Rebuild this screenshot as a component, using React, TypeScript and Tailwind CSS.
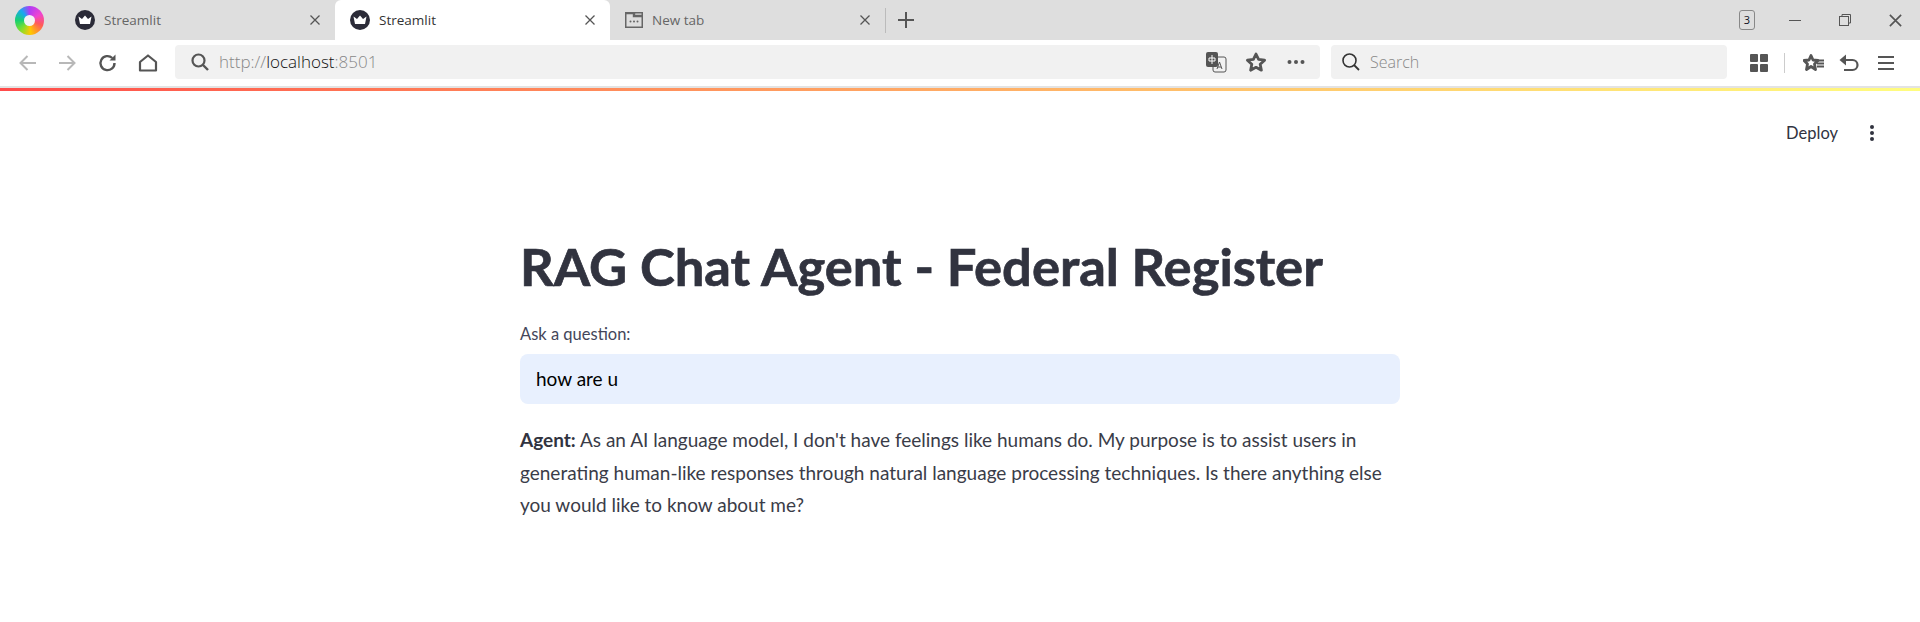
import React from "react";

const ui = "font-['Open_Sans','Noto_Sans',sans-serif]";
const st = "font-['Lato','Noto_Sans',sans-serif]";

function Crown() {
  return (
    <svg width="20" height="20" viewBox="0 0 20 20" className="shrink-0">
      <circle cx="10" cy="10" r="10" fill="#2b2b38" />
      <path d="M3.5 6.5 L7 9 L10 5.5 L13 9 L16.5 6.5 L15 14 L5 14 Z" fill="#fff" />
    </svg>
  );
}

function X({ size = 12, color = "#555" }: { size?: number; color?: string }) {
  return (
    <svg width={size} height={size} viewBox="0 0 12 12" className="shrink-0">
      <path d="M1.5 1.5 L10.5 10.5 M10.5 1.5 L1.5 10.5" stroke={color} strokeWidth="1.3" fill="none" />
    </svg>
  );
}

function Tab({ active, label, icon, w }: { active?: boolean; label: string; icon: React.ReactNode; w: string }) {
  return (
    <div className={`flex h-10 items-center pl-[15px] pr-[14px] ${w} ${active ? "rounded-t-md bg-white text-[#333]" : "text-[#666]"}`}>
      {icon}
      <span className={`ml-[9px] flex-1 text-[13.5px] ${ui}`}>{label}</span>
      <X />
    </div>
  );
}

export default function App() {
  return (
    <div className="flex h-[622px] w-[1920px] flex-col overflow-hidden bg-white">
      <div className="flex h-10 items-center bg-[#dedede]">
        <div className="flex w-[60px] justify-start pl-[15px]">
          <div className="flex h-[29px] w-[29px] items-center justify-center rounded-full bg-[conic-gradient(#b03cf5_0deg,#f044d0_60deg,#ff5a5a_110deg,#ffc800_175deg,#7adf30_225deg,#18d070_270deg,#18a8f0_320deg,#b03cf5_360deg)] blur-[0.6px]">
            <div className="h-[11px] w-[11px] rounded-full bg-[#f4f4f4]" />
          </div>
        </div>
        <Tab label="Streamlit" w="w-[275px]" icon={<Crown />} />
        <Tab active label="Streamlit" w="w-[275px]" icon={<Crown />} />
        <Tab
          label="New tab"
          w="w-[275px]"
          icon={
            <svg width="18" height="16" viewBox="0 0 18 16" className="shrink-0">
              <rect x="0.75" y="0.75" width="16.5" height="14.5" fill="none" stroke="#666" strokeWidth="1.5" />
              <path d="M1 1h8v3h8" fill="none" stroke="#666" strokeWidth="2.4" />
              <circle cx="5.5" cy="9.5" r="1" fill="#666" />
              <circle cx="9" cy="9.5" r="1" fill="#666" />
              <circle cx="12.5" cy="9.5" r="1" fill="#666" />
            </svg>
          }
        />
        <div className="h-[25px] w-px bg-[#bbb]" />
        <svg width="16" height="16" viewBox="0 0 16 16" className="ml-[12px]">
          <path d="M8 0v16M0 8h16" stroke="#555" strokeWidth="2" />
        </svg>
        <div className="flex-1" />
        <div className={`mr-[33px] flex h-[20px] w-[16px] items-center justify-center rounded-[3px] border border-[#888] text-[11px] text-[#112] ${ui}`}>3</div>
        <svg width="14" height="14" viewBox="0 0 14 14" className="mr-[36px]">
          <path d="M1 7.5h12" stroke="#555" strokeWidth="1" />
        </svg>
        <svg width="14" height="14" viewBox="0 0 14 14" className="mr-[36px]">
          <rect x="1.5" y="3.5" width="9" height="9" fill="none" stroke="#555" />
          <path d="M4 3.5V1.5h8.5v8.5h-2" fill="none" stroke="#555" />
        </svg>
        <X size={15} color="#555" />
        <div className="w-[17px]" />
      </div>

      <div className="flex h-[48px] items-center border-b-2 border-b-[#e3e3e3] bg-white">
        <svg width="20" height="20" viewBox="0 0 20 20" className="ml-[18px]">
          <path d="M18 10H3M9.5 3 L2.5 10 L9.5 17" fill="none" stroke="#b8b8b8" strokeWidth="2" />
        </svg>
        <svg width="20" height="20" viewBox="0 0 20 20" className="ml-[19px]">
          <path d="M2 10h15M10.5 3 L17.5 10 L10.5 17" fill="none" stroke="#b8b8b8" strokeWidth="2" />
        </svg>
        <svg width="20" height="20" viewBox="0 0 20 20" className="ml-[21px]">
          <path d="M16.5 10a7 7 0 1 1-2.2-5" fill="none" stroke="#555" strokeWidth="2.4" />
          <path d="M17.5 1.5v6h-6z" fill="#555" />
        </svg>
        <svg width="20" height="20" viewBox="0 0 20 20" className="ml-[20px]">
          <path d="M2 17.5V9l8-6.5L18 9v8.5z" fill="none" stroke="#555" strokeWidth="2.2" strokeLinejoin="round" />
        </svg>
        <div className="mb-[2px] ml-[17px] flex h-[34px] w-[1145px] items-center rounded-[4px] bg-[#f1f1f1]">
          <svg width="20" height="20" viewBox="0 0 20 20" className="ml-[15px]">
            <circle cx="8.5" cy="8.5" r="6" fill="none" stroke="#555" strokeWidth="2.2" />
            <path d="M13 13l5 5" stroke="#555" strokeWidth="2.4" />
          </svg>
          <span className={`ml-[9px] flex-1 text-[17px] font-light text-[#888] ${ui}`}>
            http://<span className="text-[#111]">localhost</span>:8501
          </span>
          <svg width="22" height="22" viewBox="0 0 22 22" className="mr-[18px]">
            <rect x="8" y="6" width="13" height="15" rx="2" fill="#f1f1f1" stroke="#555" />
            <rect x="1" y="1" width="12" height="15" rx="2" fill="#555" />
            <path d="M4 7h6v3H4zM7 4v9" fill="none" stroke="#fff" />
            <path d="M12 18l2.5-7 2.5 7M13 16h3" fill="none" stroke="#555" />
          </svg>
          <svg width="22" height="22" viewBox="0 0 22 22" className="mr-[20px]">
            <path d="M11 3l2.6 5.4 6 .8-4.4 4.1 1.2 5.9L11 16.3l-5.4 2.9 1.2-5.9-4.4-4.1 6-.8z" fill="none" stroke="#555" strokeWidth="2.8" strokeLinejoin="round" />
          </svg>
          <svg width="18" height="6" viewBox="0 0 18 6" className="mr-[15px]">
            <circle cx="2.5" cy="3" r="2" fill="#555" />
            <circle cx="9" cy="3" r="2" fill="#555" />
            <circle cx="15.5" cy="3" r="2" fill="#555" />
          </svg>
        </div>
        <div className="mb-[2px] ml-[11px] flex h-[34px] w-[396px] items-center rounded-[4px] bg-[#f1f1f1]">
          <svg width="20" height="20" viewBox="0 0 20 20" className="ml-[10px]">
            <circle cx="8.5" cy="8.5" r="6.5" fill="none" stroke="#333" strokeWidth="1.6" />
            <path d="M13 13l5 5" stroke="#333" strokeWidth="1.8" />
          </svg>
          <span className={`ml-[9px] text-[16px] font-light text-[#888] ${ui}`}>Search</span>
        </div>
        <svg width="18" height="18" viewBox="0 0 18 18" className="ml-[23px]">
          <rect x="0" y="0" width="8" height="8" rx="1" fill="#555" />
          <rect x="10" y="0" width="8" height="8" rx="1" fill="#555" />
          <rect x="0" y="10" width="8" height="8" rx="1" fill="#555" />
          <rect x="10" y="10" width="8" height="8" rx="1" fill="#555" />
        </svg>
        <div className="ml-[16px] h-[20px] w-px bg-[#ccc]" />
        <svg width="21" height="20" viewBox="0 0 21 20" className="ml-[18px]">
          <path d="M8 2.5l2 4.5 5 .5-3.5 3.5 1 5.5L8 13.5 3.5 16.5l1-5.5L1 7.5l5-.5z" fill="none" stroke="#555" strokeWidth="2.8" strokeLinejoin="round" />
          <path d="M13 7.5h8M14 10.5h7M14 13.5h7" stroke="#555" strokeWidth="1.8" />
        </svg>
        <svg width="20" height="20" viewBox="0 0 20 20" className="ml-[15px]">
          <path d="M5 7h8.5a5 5 0 0 1 0 10H5" fill="none" stroke="#555" strokeWidth="2.2" />
          <path d="M7 1.5v11L0.5 7z" fill="#555" />
        </svg>
        <svg width="16" height="16" viewBox="0 0 16 16" className="ml-[19px]">
          <path d="M0 2h16M0 8h16M0 14h16" stroke="#555" strokeWidth="2" />
        </svg>
      </div>

      <div className="h-[3px] bg-gradient-to-r from-[#ff4b4b] to-[#fffd80]" />

      <div className={`flex h-[84px] items-center justify-end ${st}`}>
        <span className="mr-[31px] text-[16.5px] text-[#31333f]">Deploy</span>
        <svg width="6" height="18" viewBox="0 0 6 18" className="mr-[45px]">
          <circle cx="3" cy="3" r="2" fill="#31333f" />
          <circle cx="3" cy="9" r="2" fill="#31333f" />
          <circle cx="3" cy="15" r="2" fill="#31333f" />
        </svg>
      </div>

      <main className={`ml-[520px] w-[880px] pt-[58px] text-[#31333f] ${st}`}>
        <h1 className="text-[52.5px] leading-[66px] font-bold whitespace-nowrap [-webkit-text-stroke:0.7px_#31333f]">RAG Chat Agent - Federal Register</h1>
        <label className="mt-[25px] block text-[16.5px] leading-[20px] text-[#44465a]">Ask a question:</label>
        <div className="mt-[10px] flex h-[50px] items-center rounded-lg bg-[#e8f0fe] px-4 text-[19px] text-black">how are u</div>
        <p className="mt-[20px] text-[19px] leading-[32.5px] text-[#3a3c48]">
          <strong className="text-[#31333f]">Agent:</strong> As an AI language model, I don't have feelings like humans do. My purpose is to assist users in generating human-like responses through natural language processing techniques. Is there anything else you would like to know about me?
        </p>
      </main>
    </div>
  );
}
